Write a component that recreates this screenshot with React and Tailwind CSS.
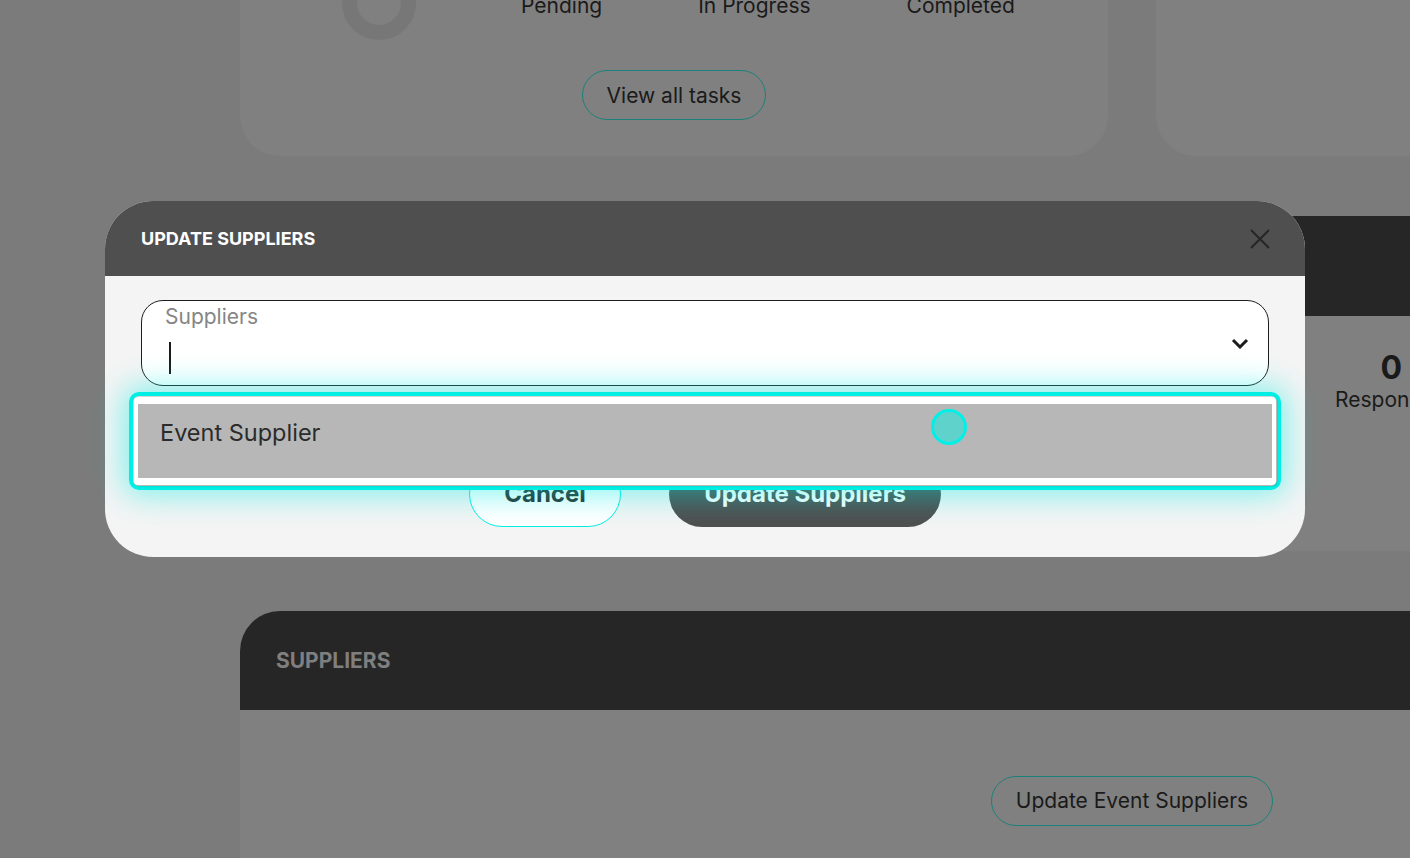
import { useState } from 'react'

const font = { fontFamily: 'Inter, "Noto Sans", sans-serif' }

// page behind the dialog, drawn already dimmed by the backdrop
function Donut() {
  return (
    <svg width="74" height="74" viewBox="0 0 74 74" className="shrink-0">
      <circle cx="37" cy="37" r="29.5" fill="none" stroke="#777777" strokeWidth="15" />
    </svg>
  )
}

function TaskCard() {
  const stats = ['Pending', 'In Progress', 'Completed']
  return (
    <div className="w-[868px] h-[240px] bg-[#808080] rounded-[40px] pt-[40px] shrink-0">
      <div className="flex items-start pl-[102px]">
        <div className="mt-[10px]"><Donut /></div>
        <div className="flex gap-[96px] ml-[105px]">
          {stats.map(s => (
            <div key={s} className="flex flex-col items-center">
              <span className="text-[28px] leading-[36px] font-bold text-[#1a1a1a]">0</span>
              <span className="text-[21px] leading-[28px] text-[#1a1a1a]">{s}</span>
            </div>
          ))}
        </div>
      </div>
      <div className="flex justify-center mt-[30px]">
        <button className="h-[50px] w-[184px] rounded-full border border-[#1a807b] text-[21px] text-[#1a1a1a] pt-[2px]">View all tasks</button>
      </div>
    </div>
  )
}

function Background() {
  return (
    <div className="pl-[240px] -mt-[84px] w-[1700px]">
      <div className="flex gap-[48px]">
        <TaskCard />
        <div className="w-[500px] h-[240px] bg-[#808080] rounded-[40px]" />
      </div>

      <div className="flex gap-[48px] mt-[60px]">
        <div className="w-[868px] h-[335px] bg-[#808080] rounded-[40px] overflow-hidden">
          <div className="h-[100px] bg-[#262626]" />
        </div>
        <div className="w-[500px] h-[335px] bg-[#808080] rounded-[40px] overflow-hidden">
          <div className="h-[100px] bg-[#262626]" />
          <div className="pt-[33px] pl-[179px] flex">
            <div className="flex flex-col items-center">
              <span className="text-[32px] leading-[38px] font-bold text-[#1a1a1a] ml-[4px]">0</span>
              <span className="text-[21px] leading-[26px] text-[#1a1a1a]">Responses</span>
            </div>
          </div>
        </div>
      </div>

      <div className="mt-[60px] w-[1300px] h-[320px] bg-[#808080] rounded-[40px] overflow-hidden">
        <div className="h-[99px] bg-[#262626] flex items-center pl-[36px]">
          <span className="text-[21px] font-bold text-[#7f7f7f]">SUPPLIERS</span>
        </div>
        <div className="pt-[66px] pl-[751px]">
          <button className="h-[50px] w-[282px] rounded-full border border-[#1a807b] text-[21px] text-[#1a1a1a]">Update Event Suppliers</button>
        </div>
      </div>
    </div>
  )
}

function Modal() {
  const [value] = useState('')
  return (
    <div className="relative w-[1200px] h-[356px] bg-[#f4f4f4] rounded-[48px]">
      <div className="h-[75px] bg-[#4f4f4f] rounded-t-[48px] flex items-center justify-between px-[36px]">
        <span className="text-[18px] font-bold text-white">UPDATE SUPPLIERS</span>
        <svg width="20" height="20" viewBox="0 0 20 20" className="mr-[-1px]">
          <path d="M1 1 19 19M19 1 1 19" stroke="#262626" strokeWidth="2" />
        </svg>
      </div>

      <div className="px-[36px] pt-[24px]">
        <div className="h-[86px] bg-white border border-[#1e1e1e] rounded-[22px] flex items-center">
          <div className="flex-1 self-stretch flex flex-col pl-[23px] pt-[3px]">
            <span className="text-[21px] leading-[26px] text-[#858585]">Suppliers</span>
            <span className="mt-[12px] ml-[4px] w-[2px] h-[32px] bg-[#1a1a1a]">{value}</span>
          </div>
          <svg width="18" height="11" viewBox="0 0 18 11" className="mr-[19px]">
            <path d="M2 2 9 9 16 2" fill="none" stroke="#1c1c1c" strokeWidth="3" />
          </svg>
        </div>

        <div className="flex justify-center gap-[48px] mt-[75px]">
          <button className="h-[66px] w-[152px] rounded-full border border-[#00efe4] bg-white text-[24px] font-bold text-[#2b2b2b]">Cancel</button>
          <button className="h-[66px] w-[272px] rounded-full bg-[#4f4f4f] text-[24px] font-bold text-white">Update Suppliers</button>
        </div>
      </div>

      {/* open listbox with focus ring */}
      <div className="absolute left-[24px] top-[191px] w-[1152px] border-4 border-[#00efe4] rounded-[10px] p-[1px] bg-[#d9d9d9] shadow-[0_0_30px_6px_rgba(0,238,228,0.45)]">
        <div className="bg-white rounded-[4px] py-[7px] px-[4px] shadow-[1px_1px_2px_rgba(0,0,0,0.2)]">
          <div className="h-[74px] bg-[#b7b7b7] pl-[22px] pt-[13px]">
            <span className="text-[23.5px] leading-[32px] text-[#2b2b2b]">Event Supplier</span>
          </div>
        </div>
      </div>
    </div>
  )
}

export default function App() {
  return (
    <div className="relative w-[1410px] h-[858px] overflow-hidden bg-[#7b7b7b]" style={font}>
      <Background />
      <div className="absolute inset-0 flex justify-center items-start pt-[201px]">
        <Modal />
      </div>
      <div className="absolute left-[931px] top-[409px] w-[36px] h-[36px] rounded-full border-[3px] border-[#00f0e8] bg-[#5fd3cb]" />
    </div>
  )
}
